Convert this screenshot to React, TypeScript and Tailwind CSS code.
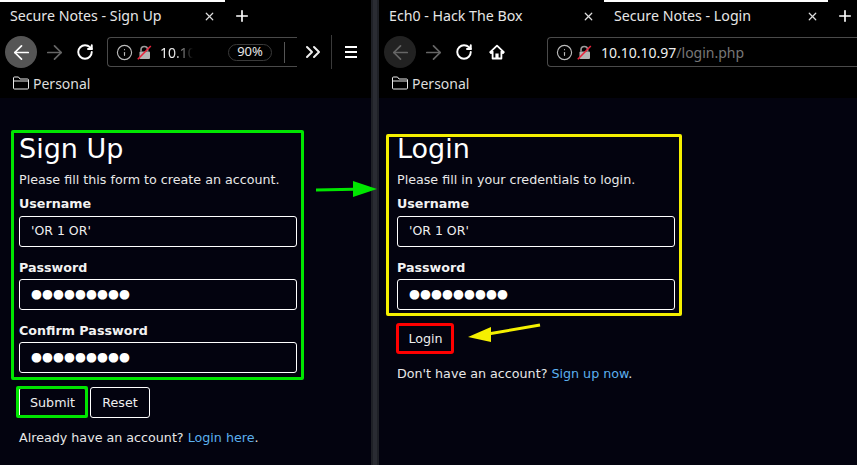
import React from "react";
import { ArrowLeft, ArrowRight, RotateCw, Info, ChevronsRight, X, Plus } from "lucide-react";

const Lock = () => (
  <svg width="15" height="15" viewBox="0 0 15 15" className="shrink-0">
    <path d="M4 6.5V4.8a3.3 3.3 0 0 1 6.6 0V6.5" fill="none" stroke="#9a9a9a" strokeWidth="1.6" />
    <rect x="2.5" y="6.5" width="10.5" height="7.5" rx="1" fill="#b5b5b5" />
    <path d="M0.8 14.2 13.8 1" stroke="#e8243c" strokeWidth="1.6" />
  </svg>
);

const FolderIcon = () => (
  <svg width="16" height="14" viewBox="0 0 16 14" className="shrink-0">
    <path d="M0.5 12V2a1 1 0 0 1 1-1h4l1.5 2h7.5a1 1 0 0 1 1 1v8a1 1 0 0 1-1 1h-13a1 1 0 0 1-1-1z" fill="none" stroke="#e8e8e8" strokeWidth="1" />
    <path d="M0.5 5h15" stroke="#e8e8e8" strokeWidth="1" />
  </svg>
);

const HomeIcon = () => (
  <svg width="16" height="16" viewBox="0 0 16 16" className="shrink-0">
    <path d="M8 1.6 1.2 8.2l.8.8 1.6-1.4V14.5h8.8V7.6L14 9l.8-.8z" fill="none" stroke="#fff" strokeWidth="1.8" strokeLinejoin="round" />
    <rect x="6.4" y="9.5" width="3.2" height="5" fill="#fff" />
  </svg>
);

const Tab = ({ title, active, w }: { title: string; active?: boolean; w: string }) => (
  <div className={`relative flex h-full items-center justify-between pl-[10px] pr-[9px] ${w}`}>
    {active && <div className="absolute left-0 right-0 top-0 h-[2px] bg-white" />}
    <span className="text-[14.2px] text-[#e6e6e6]">{title}</span>
    <X size={13} strokeWidth={2.2} color="#ddd" />
  </div>
);

const Field = ({ label, value, secret, mt, gap }: { label: string; value: string; secret?: boolean; mt: string; gap: string }) => (
  <div className={mt}>
    <div className="text-[12.7px] font-bold leading-[16px] text-[#f2f2f2]">{label}</div>
    <div
      className={`${gap} flex h-[31px] w-[278px] items-center rounded-[3px] border border-white pl-[11px] ${
        secret ? "text-[12.6px] text-white" : "text-[12.5px] text-[#eeeeee]"
      }`}
    >
      {value}
    </div>
  </div>
);

const Btn = ({ children, cls }: { children: React.ReactNode; cls: string }) => (
  <div className={`flex h-[31px] items-center justify-center rounded-[3px] text-[12.7px] text-[#eeeeee] ${cls}`}>{children}</div>
);

export default function App() {
  return (
    <div className="relative flex h-[465px] w-[857px] overflow-hidden bg-[#03030f] font-['DejaVu_Sans',sans-serif]">
      {/* Left window */}
      <div className="flex w-[371px] shrink-0 flex-col">
        <div className="h-[98px] bg-black font-['Noto_Sans','Open_Sans',sans-serif]">
          <div className="flex h-[32px] items-center">
            <Tab title="Secure Notes - Sign Up" active w="w-[225px]" />
            <Plus size={18} strokeWidth={2.2} color="#fff" className="ml-[8px]" />
          </div>
          <div className="flex h-[40px] items-center">
            <div className="ml-[5px] flex h-[32px] w-[32px] items-center justify-center rounded-full bg-[#555555]">
              <ArrowLeft size={23} strokeWidth={1.8} color="#fff" />
            </div>
            <ArrowRight size={23} strokeWidth={1.8} color="#666" className="ml-[6px]" />
            <RotateCw size={18} strokeWidth={2.6} color="#fff" className="ml-[10px]" />
            <div className="ml-[13px] flex h-[30px] w-[190px] items-center rounded-l-[4px] border-y border-l border-[#4a4a4a] pl-[8px]">
              <Info size={17} strokeWidth={1.6} color="#bbb" />
              <div className="ml-[4px]"><Lock /></div>
              <span className="ml-[8px] w-[33px] overflow-hidden whitespace-nowrap text-[14px] text-[#eee] [mask-image:linear-gradient(to_right,#000_40%,transparent)]">10.10</span>
              <div className="ml-[35px] flex h-[17px] w-[44px] items-center justify-center rounded-full border border-[#3a3a3a] text-[13px] text-[#e6e6e6]">90%</div>
              <div className="ml-[12px] h-[21px] w-px bg-[#555]" />
            </div>
            <ChevronsRight size={24} strokeWidth={2} color="#eee" className="ml-[4px]" />
            <div className="ml-[6px] h-[34px] w-px bg-[#3a3a3a]" />
            <div className="ml-[13px] flex h-[12px] w-[12px] flex-col justify-between">
              <div className="h-[2px] bg-white" />
              <div className="h-[2px] bg-white" />
              <div className="h-[2px] bg-white" />
            </div>
          </div>
          <div className="flex h-[22px] items-center pl-[13px]">
            <FolderIcon />
            <span className="ml-[4px] text-[14px] text-[#dddddd]">Personal</span>
          </div>
        </div>
        <div className="pl-[19px] pt-[32px]">
          <h2 className="text-[27px] leading-[38px] text-white">Sign Up</h2>
          <p className="mt-[4px] text-[12.7px] leading-[16px] text-[#e8e8e8]">Please fill this form to create an account.</p>
          <Field mt="mt-[8px]" gap="mt-[4px]" label="Username" value="'OR 1 OR'" />
          <Field mt="mt-[13px]" gap="mt-[3px]" label="Password" value="●●●●●●●●●" secret />
          <Field mt="mt-[13px]" gap="mt-[3px]" label="Confirm Password" value="●●●●●●●●●" secret />
          <div className="mt-[14px] flex gap-[4px]">
            <Btn cls="w-[67px] border border-white">Submit</Btn>
            <Btn cls="w-[60px] border border-white">Reset</Btn>
          </div>
          <p className="mt-[12px] text-[12.7px] leading-[16px] text-[#e8e8e8]">
            Already have an account? <span className="text-[#5cb0ee]">Login here</span>.
          </p>
        </div>
      </div>

      {/* Divider */}
      <div className="w-[8px] shrink-0 border-x-2 border-x-[#1f2127] bg-[#2a2c33]" />

      {/* Right window */}
      <div className="flex min-w-0 flex-1 flex-col">
        <div className="h-[98px] bg-black font-['Noto_Sans','Open_Sans',sans-serif]">
          <div className="flex h-[32px] items-center">
            <Tab title="Ech0 - Hack The Box" w="w-[225px]" />
            <Tab title="Secure Notes - Login" active w="w-[224px]" />
            <Plus size={18} strokeWidth={2.2} color="#fff" className="ml-[8px]" />
          </div>
          <div className="flex h-[40px] items-center">
            <div className="ml-[5px] flex h-[32px] w-[32px] items-center justify-center rounded-full bg-[#222222]">
              <ArrowLeft size={23} strokeWidth={1.8} color="#666" />
            </div>
            <ArrowRight size={23} strokeWidth={1.8} color="#666" className="ml-[6px]" />
            <RotateCw size={18} strokeWidth={2.6} color="#fff" className="ml-[10px]" />
            <div className="ml-[16px]"><HomeIcon /></div>
            <div className="ml-[42px] flex h-[30px] flex-1 items-center rounded-l-[4px] border-y border-l border-[#4a4a4a] pl-[8px]">
              <Info size={17} strokeWidth={1.6} color="#bbb" />
              <div className="ml-[4px]"><Lock /></div>
              <span className="ml-[9px] whitespace-nowrap text-[14px] text-[#eee]">
                10.10.10.97<span className="text-[#777]">/login.php</span>
              </span>
            </div>
          </div>
          <div className="flex h-[22px] items-center pl-[13px]">
            <FolderIcon />
            <span className="ml-[4px] text-[14px] text-[#dddddd]">Personal</span>
          </div>
        </div>
        <div className="pl-[18px] pt-[32px]">
          <h2 className="text-[27px] leading-[38px] text-white">Login</h2>
          <p className="mt-[4px] text-[12.7px] leading-[16px] text-[#e8e8e8]">Please fill in your credentials to login.</p>
          <Field mt="mt-[8px]" gap="mt-[4px]" label="Username" value="'OR 1 OR'" />
          <Field mt="mt-[13px]" gap="mt-[3px]" label="Password" value="●●●●●●●●●" secret />
          <div className="mt-[13px] flex">
            <Btn cls="-ml-[1px] w-[58px] border-[3px] border-[#ff0000] pl-[1px]">Login</Btn>
          </div>
          <p className="mt-[12px] text-[12.7px] leading-[16px] text-[#e8e8e8]">
            Don't have an account? <span className="text-[#5cb0ee]">Sign up now</span>.
          </p>
        </div>
      </div>

      {/* Annotations */}
      <div className="absolute left-[11px] top-[130px] h-[250px] w-[293px] rounded-[2px] border-[3px] border-[#00e600]" />
      <div className="absolute left-[16px] top-[386px] h-[32px] w-[72px] rounded-[2px] border-[3px] border-[#00e600]" />
      <div className="absolute left-[386px] top-[134px] h-[182px] w-[296px] rounded-[2px] border-[3px] border-[#f5f000]" />
      <svg className="absolute left-[310px] top-[175px]" width="70" height="30" viewBox="0 0 70 30">
        <path d="M6 15 L56 14" stroke="#00e600" strokeWidth="3" />
        <path d="M43 6 L67 14 L43 22 Z" fill="#00e600" />
      </svg>
      <svg className="absolute left-[460px] top-[315px]" width="90" height="40" viewBox="0 0 90 40">
        <path d="M80 10 L28 19" stroke="#f5f000" strokeWidth="3" />
        <path d="M8 22 L31 12 L31 27 Z" fill="#f5f000" />
      </svg>
    </div>
  );
}
